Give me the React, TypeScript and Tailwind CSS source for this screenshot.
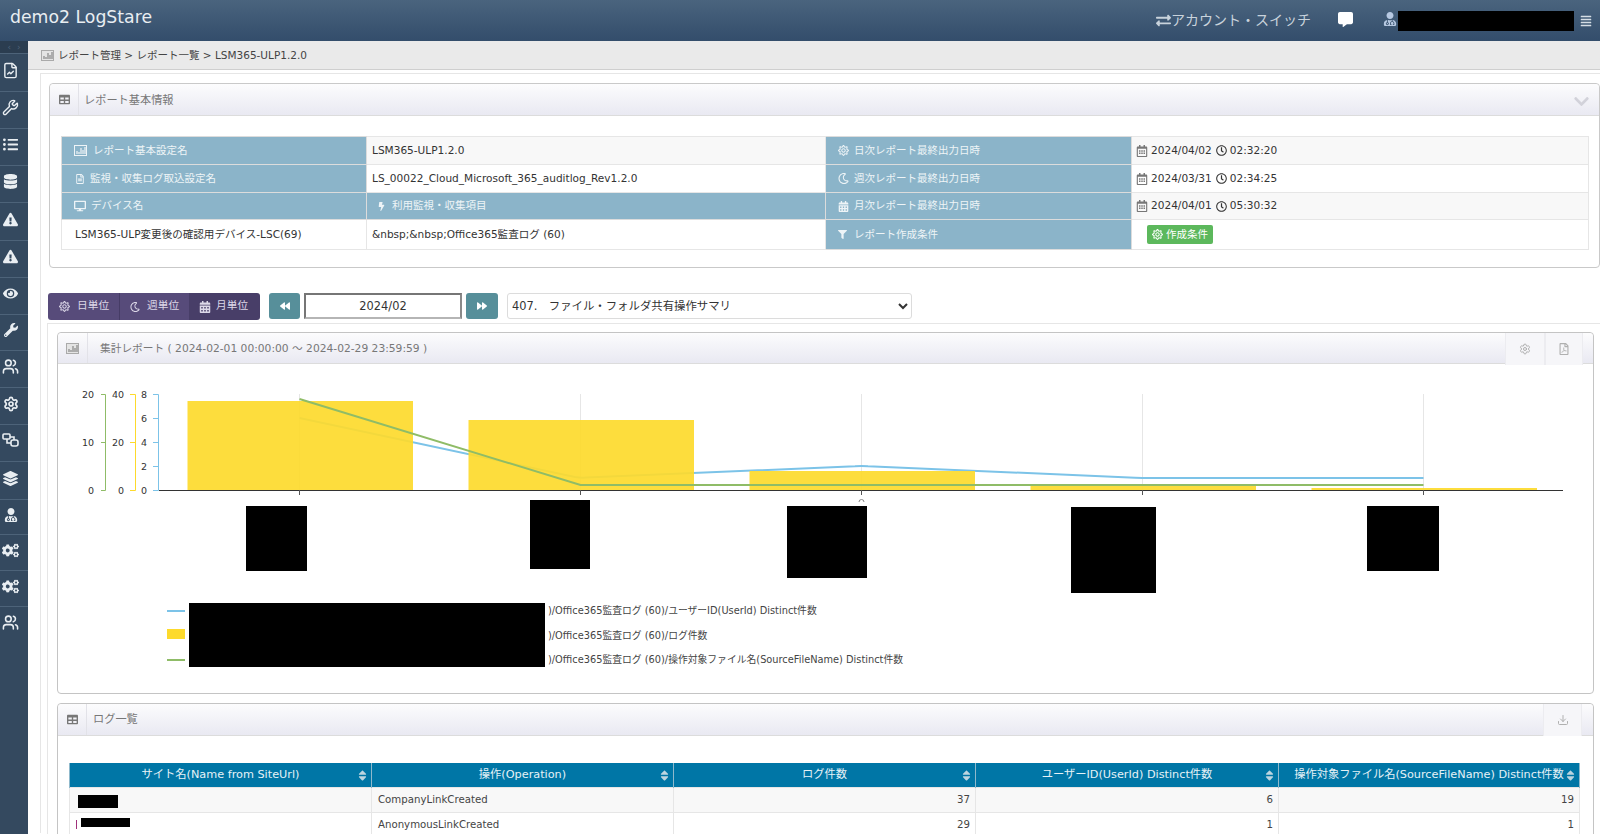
import type { ReactNode } from "react";
import { FileChartLine, Settings, Download, Users, Wrench } from "lucide-react";
import {
  FaAlignJustify,
  FaBolt,
  FaCalendarAlt,
  FaChevronDown,
  FaCogs,
  FaCommentAlt,
  FaDatabase,
  FaDesktop,
  FaExchangeAlt,
  FaExclamationTriangle,
  FaEye,
  FaFilter,
  FaLayerGroup,
  FaListUl,
  FaRegCalendarAlt,
  FaRegClock,
  FaRegFileAlt,
  FaRegFilePdf,
  FaRegMoon,
  FaRegSun,
  FaSort,
  FaTable,
  FaUserMd,
  FaWrench,
  FaBackward,
  FaForward,
} from "react-icons/fa";

// two linked boxes in the side menu, no package has this one
function LinkedBoxes() {
  return (
    <svg width="17" height="15" viewBox="0 0 17 15" fill="none" stroke="currentColor" strokeWidth="1.6">
      <rect x="1" y="1" width="7" height="5" rx="1" />
      <rect x="9" y="7" width="7" height="6" rx="2" />
      <path d="M8 4h4v3M5 6v4h4" />
    </svg>
  );
}

// small framed bar chart used in the breadcrumb and the report panel
function ChartBox({ fill = "#e4e4e4", stroke = "#aaa", bars = "#888" }: { fill?: string; stroke?: string; bars?: string }) {
  return (
    <svg width="13" height="11" viewBox="0 0 13 11">
      <rect x="0.5" y="0.5" width="12" height="10" fill={fill} stroke={stroke} />
      <path d="M3 9V6M5 9V7M7 9V3M9 9V5M11 9V2" stroke={bars} strokeWidth="1.2" />
    </svg>
  );
}

const sideIcons = [
  <FileChartLine key="a" size={17} strokeWidth={2} />,
  <Wrench key="b" size={17} strokeWidth={2} />,
  <FaListUl key="c" size={15} />,
  <FaDatabase key="d" size={15} />,
  <FaExclamationTriangle key="e" size={15} />,
  <FaExclamationTriangle key="f" size={15} />,
  <FaEye key="g" size={15} />,
  <FaWrench key="h" size={14} />,
  <Users key="i" size={17} strokeWidth={2.2} />,
  <Settings key="j" size={16} strokeWidth={2.6} />,
  <LinkedBoxes key="k" />,
  <FaLayerGroup key="l" size={15} />,
  <FaUserMd key="m" size={14} />,
  <FaCogs key="n" size={17} />,
  <FaCogs key="o" size={17} />,
  <Users key="p" size={17} strokeWidth={2.2} />,
];

const sideHeights = [38, 37, 37, 37, 38, 37, 37, 36, 37, 37, 37, 38, 35, 36, 36, 36];

function PanelHead({ icon, title, iconW, titleX, right, height = "h-[32px]" }: { icon: ReactNode; title: string; iconW: string; titleX: string; right?: ReactNode; height?: string }) {
  return (
    <div className={`relative flex items-center rounded-t-[4px] border-b border-[#dcdcdc] bg-gradient-to-b from-[#fcfcfd] to-[#e9e9f2] ${height}`}>
      <div className={`flex h-full items-center justify-center border-r border-[#e2e2e8] text-[#777] ${iconW}`}>{icon}</div>
      <span className={`text-[#777] ${titleX}`}>{title}</span>
      {right}
    </div>
  );
}

function HeadCell({ children, className }: { children: ReactNode; className: string }) {
  return (
    <div className={`absolute top-0 flex h-[32px] items-center justify-center border-x border-[#ececf0] bg-[#f6f6f9] text-[#b0b0b0] ${className}`}>
      {children}
    </div>
  );
}

function Label({ icon, text, pad }: { icon: ReactNode; text: string; pad: string }) {
  return (
    <td className="border border-[#dcdcdc] bg-[#8bb4c9] p-0 text-[10.5px] text-[#eef4f7]">
      <div className={`flex items-center ${pad}`}>
        {icon}
        <span>{text}</span>
      </div>
    </td>
  );
}

function Stamp({ date, time }: { date: string; time: string }) {
  return (
    <div className="flex items-center pl-[4px]">
      <FaRegCalendarAlt size={12} className="text-[#777]" />
      <span className="ml-[3px]">{date}</span>
      <FaRegClock size={11} className="ml-[4px] text-[#333]" />
      <span className="ml-[3px]">{time}</span>
    </div>
  );
}

const info = "border border-[#e6e6e6] p-0 text-[10.55px] text-[#333]";

const logColumns = [
  "サイト名(Name from SiteUrl)",
  "操作(Operation)",
  "ログ件数",
  "ユーザーID(UserId) Distinct件数",
  "操作対象ファイル名(SourceFileName) Distinct件数",
];

const logRows = [
  { op: "CompanyLinkCreated", count: 37, user: 6, file: 19 },
  { op: "AnonymousLinkCreated", count: 29, user: 1, file: 1 },
];

const ticks = [299.5, 580.5, 861.5, 1142.5, 1423.5];
const bars = [
  { x: 187.5, y: 401 },
  { x: 468.5, y: 420 },
  { x: 749.5, y: 471 },
  { x: 1030.5, y: 486 },
  { x: 1311.5, y: 488 },
];
const redactions = [
  "left-[188px] top-[142px] h-[65px] w-[61px]",
  "left-[472px] top-[136px] h-[69px] w-[60px]",
  "left-[729px] top-[142px] h-[72px] w-[80px]",
  "left-[1013px] top-[143px] h-[86px] w-[85px]",
  "left-[1309px] top-[142px] h-[65px] w-[72px]",
];

function Chart() {
  return (
    <svg className="absolute left-0 top-0" width="1536" height="329" viewBox="58 364 1536 329">
      {ticks.map((x) => (
        <line key={x} x1={x} x2={x} y1={394} y2={490} stroke="#e6e6e6" />
      ))}
      <path
        d="M299.5 418 L575 477 Q580.5 478 586 477.6 L855 466.3 Q861.5 465.7 868 466.3 L1135 477.7 Q1142 478 1150 478 L1423.5 478"
        fill="none"
        stroke="#7cc3e8"
        strokeWidth="2"
      />
      {bars.map((b) => (
        <rect key={b.x} x={b.x} y={b.y} width={225.5} height={490 - b.y} fill="#fdda2c" fillOpacity={0.92} />
      ))}
      <path d="M299.5 399 L580.5 485 L1423.5 485" fill="none" stroke="#8fbc67" strokeWidth="2" />
      <line x1={159} x2={1563} y1={490.5} y2={490.5} stroke="#333" />
      {ticks.map((x) => (
        <line key={x} x1={x} x2={x} y1={490} y2={495} stroke="#555" />
      ))}

      {/* three value axes */}
      <path d="M101 394.5h4.5v96h-4.5M101 442.5h4.5" fill="none" stroke="#8fbc67" />
      <path d="M130 394.5h5.5v96h-5.5M130 442.5h5.5" fill="none" stroke="#fdda2c" />
      <path d="M153 394.5h5.5v96h-5.5M153 418.5h5.5M153 442.5h5.5M153 466.5h5.5" fill="none" stroke="#7cc3e8" />
      <g fontSize="9.5" fill="#333" textAnchor="end">
        {[["20", 398], ["10", 446], ["0", 494]].map(([t, y]) => (
          <text key={t} x={94} y={y}>{t}</text>
        ))}
        {[["40", 398], ["20", 446], ["0", 494]].map(([t, y]) => (
          <text key={t} x={124} y={y}>{t}</text>
        ))}
        {[["8", 398], ["6", 422], ["4", 446], ["2", 470], ["0", 494]].map(([t, y]) => (
          <text key={t} x={147} y={y}>{t}</text>
        ))}
      </g>
      <path d="M859 502a2.5 2.5 0 0 1 5 0" fill="none" stroke="#888" />

      {/* legend keys */}
      <line x1={167} x2={185} y1={611} y2={611} stroke="#7cc3e8" strokeWidth="2" />
      <rect x={167} y={629} width={18} height={10} fill="#fdda2c" />
      <line x1={167} x2={185} y1={660} y2={660} stroke="#8fbc67" strokeWidth="2" />
    </svg>
  );
}

export default function App() {
  return (
    <div className="relative h-[834px] w-[1600px] overflow-hidden bg-white [font-family:DejaVu_Sans,Noto_Sans_CJK_JP,sans-serif] text-[#333]">
      {/* top bar */}
      <header className="relative h-[41px] bg-gradient-to-b from-[#4a647e] to-[#334d6b]">
        <span className="absolute left-[10px] top-[4px] text-[17.3px] leading-[27px] text-[#e9eef2]">demo2 LogStare</span>
        <div className="absolute left-[1156px] top-[9px] flex items-center text-[14px] leading-[22px] text-[#c9d3dc]">
          <FaExchangeAlt size={15} />
          <span>アカウント・スイッチ</span>
        </div>
        <FaCommentAlt size={15} className="absolute left-[1338px] top-[12px] text-white" />
        <FaUserMd size={14} className="absolute left-[1383px] top-[12px] text-[#b7c9e2]" />
        <div className="absolute left-[1398px] top-[11px] h-[20px] w-[176px] bg-black" />
        <FaAlignJustify size={12} className="absolute left-[1580px] top-[15px] text-[#d5dde4]" />
      </header>

      <div className="flex h-[793px]">
        {/* side menu */}
        <nav className="w-[28px] shrink-0 bg-[#34495f] text-[#e9eef2]">
          <div className="flex h-[12px] items-center justify-center gap-[6px] bg-[#2b3d50] text-[9px] leading-none text-[#4c6177]">
            <span>‹</span>
            <span>›</span>
          </div>
          {sideIcons.map((icon, i) => (
            <div
              key={i}
              className="flex items-center justify-center border-t border-[#4d6379] pb-[5px] pr-[7px]"
              style={{ height: sideHeights[i] }}
            >
              {icon}
            </div>
          ))}
        </nav>

        <main className="min-w-0 flex-1">
          {/* breadcrumb */}
          <div className="flex h-[29px] items-center border-b border-[#cfcfcf] bg-[#eaeaea] pl-[13px] pt-[1px] text-[10.5px] text-[#444]">
            <span className="mr-[4px]"><ChartBox /></span>
            <span>レポート管理 &gt; レポート一覧 &gt; LSM365-ULP1.2.0</span>
          </div>

          <div className="ml-[12px] mt-[3px] h-[760px] border-l border-t border-[#e6e6e6]">
            {/* basic report info */}
            <section className="ml-[8px] mt-[9px] h-[185px] rounded-[4px] border border-[#c9c9c9]">
              <PanelHead
                icon={<FaTable size={11} />}
                iconW="w-[29px]"
                title="レポート基本情報"
                titleX="ml-[5px] mt-[4px] text-[11.2px]"
                right={<FaChevronDown size={17} className="absolute right-[9px] top-[9px] text-[#d2d2da]" />}
              />
              <table className="ml-[11px] mt-[20px] w-[1527px] table-fixed border-collapse">
                <colgroup>
                  <col className="w-[305px]" />
                  <col className="w-[459px]" />
                  <col className="w-[306px]" />
                  <col className="w-[457px]" />
                </colgroup>
                <tbody>
                  <tr className="h-[28px] bg-[#f8f8f8]">
                    <Label icon={<span className="mr-[6px]"><ChartBox fill="none" stroke="#eef4f7" bars="#eef4f7" /></span>} text="レポート基本設定名" pad="pl-[12px]" />
                    <td className={`${info} pl-[5px]`}>LSM365-ULP1.2.0</td>
                    <Label icon={<FaRegSun size={11} className="mr-[5px]" />} text="日次レポート最終出力日時" pad="pl-[12px]" />
                    <td className={info}><Stamp date="2024/04/02" time="02:32:20" /></td>
                  </tr>
                  <tr className="h-[28px]">
                    <Label icon={<FaRegFileAlt size={10} className="mr-[5px]" />} text="監視・収集ログ取込設定名" pad="pl-[13px]" />
                    <td className={`${info} pl-[5px]`}>LS_00022_Cloud_Microsoft_365_auditlog_Rev1.2.0</td>
                    <Label icon={<FaRegMoon size={11} className="mr-[5px]" />} text="週次レポート最終出力日時" pad="pl-[12px]" />
                    <td className={info}><Stamp date="2024/03/31" time="02:34:25" /></td>
                  </tr>
                  <tr className="h-[27px] bg-[#f8f8f8]">
                    <Label icon={<FaDesktop size={12} className="mr-[5px]" />} text="デバイス名" pad="pl-[12px]" />
                    <Label icon={<FaBolt size={9} className="mr-[6px]" />} text="利用監視・収集項目" pad="pl-[10px]" />
                    <Label icon={<FaCalendarAlt size={11} className="mr-[5px]" />} text="月次レポート最終出力日時" pad="pl-[12px]" />
                    <td className={info}><Stamp date="2024/04/01" time="05:30:32" /></td>
                  </tr>
                  <tr className="h-[30px]">
                    <td className={`${info} pl-[13px]`}>LSM365-ULP変更後の確認用デバイス-LSC(69)</td>
                    <td className={`${info} pl-[5px]`}>&amp;nbsp;&amp;nbsp;Office365監査ログ (60)</td>
                    <Label icon={<FaFilter size={9} className="mr-[7px]" />} text="レポート作成条件" pad="pl-[12px]" />
                    <td className={info}>
                      <button className="ml-[15px] flex h-[19px] w-[66px] items-center justify-center gap-[3px] rounded-[2px] bg-[#5cb85c] text-[10.5px] text-white">
                        <FaRegSun size={11} />
                        作成条件
                      </button>
                    </td>
                  </tr>
                </tbody>
              </table>
            </section>

            {/* period controls */}
            <div className="ml-[7px] mt-[25px] flex h-[27px] items-start">
              <div className="flex h-[27px] w-[212px] overflow-hidden rounded-[3px] text-[10.7px] text-[#dcd8e8]">
                <div className="flex w-[72px] items-center border-r border-[#463c66] bg-[#574b7a] pl-[11px]">
                  <FaRegSun size={11} className="mr-[7px]" />日単位
                </div>
                <div className="flex w-[69px] items-center bg-[#574b7a] pl-[10px]">
                  <FaRegMoon size={10} className="mr-[7px]" />週単位
                </div>
                <div className="flex flex-1 items-center bg-[#483e68] pl-[10px]">
                  <FaCalendarAlt size={12} className="mr-[5px]" />月単位
                </div>
              </div>
              <button className="ml-[9px] flex h-[26px] w-[31px] items-center justify-center rounded-[3px] bg-[#578f9a] text-white">
                <FaBackward size={10} />
              </button>
              <input
                readOnly
                value="2024/02"
                className="ml-[4px] h-[26px] w-[158px] border-2 border-[#767676] border-b-[#b5b5b5] border-r-[#8a8a8a] text-center text-[11.4px] text-[#333]"
              />
              <button className="ml-[4px] flex h-[26px] w-[32px] items-center justify-center rounded-[3px] bg-[#578f9a] text-white">
                <FaForward size={10} />
              </button>
              <select className="ml-[9px] h-[26px] w-[405px] rounded-[3px] border border-[#dcdcdc] bg-white text-[11.4px] text-[#333]">
                <option>407.　ファイル・フォルダ共有操作サマリ</option>
              </select>
            </div>

            <div className="ml-[6px] mt-[3px] h-[520px] border-l border-t border-[#e6e6e6]">
              {/* aggregate report */}
              <section className="relative ml-[9px] mt-[8px] h-[362px] w-[1537px] rounded-[4px] border border-[#c4c4c4]">
                <PanelHead
                  icon={<ChartBox />}
                  iconW="w-[30px]"
                  title="集計レポート ( 2024-02-01 00:00:00 ～ 2024-02-29 23:59:59 )"
                  titleX="ml-[12px] mt-[2px] text-[10.7px]"
                  height="h-[31px]"
                  right={
                    <>
                      <HeadCell className="left-[1447px] w-[40px]"><Settings size={12} /></HeadCell>
                      <HeadCell className="left-[1487px] w-[38px]"><FaRegFilePdf size={12} /></HeadCell>
                    </>
                  }
                />
                <div className="relative h-[329px]">
                  <Chart />
                  {redactions.map((r) => (
                    <div key={r} className={`absolute bg-black ${r}`} />
                  ))}
                  <div className="absolute left-[131px] top-[239px] h-[64px] w-[356px] bg-black" />
                  <div className="absolute left-[490px] top-[235px] text-[9.8px] leading-[24.5px] text-[#444]">
                    <div>)/Office365監査ログ (60)/ユーザーID(UserId) Distinct件数</div>
                    <div>)/Office365監査ログ (60)/ログ件数</div>
                    <div>)/Office365監査ログ (60)/操作対象ファイル名(SourceFileName) Distinct件数</div>
                  </div>
                </div>
              </section>

              {/* log list */}
              <section className="relative ml-[9px] mt-[9px] h-[140px] w-[1537px] rounded-t-[4px] border border-[#c4c4c4]">
                <PanelHead
                  icon={<FaTable size={11} />}
                  iconW="w-[29px]"
                  title="ログ一覧"
                  titleX="ml-[6px] mt-[2px] text-[11.2px]"
                  right={<HeadCell className="left-[1485px] w-[39px]"><Download size={12} /></HeadCell>}
                />
                <table className="ml-[11px] mt-[27px] w-[1510px] table-fixed border-collapse">
                  <colgroup>
                    <col className="w-[302px]" />
                    <col className="w-[302px]" />
                    <col className="w-[302px]" />
                    <col className="w-[303px]" />
                    <col className="w-[301px]" />
                  </colgroup>
                  <thead>
                    <tr className="h-[24px] bg-[#0076a6] text-[11.25px] font-normal text-[#e6f2f7]">
                      {logColumns.map((c) => (
                        <th key={c} className="relative border-x border-[#8fb9cc] p-0 pt-[1px] font-normal">
                          {c}
                          <FaSort size={13} className="absolute right-[2px] top-[6px] text-[#bcd5e0]" />
                        </th>
                      ))}
                    </tr>
                  </thead>
                  <tbody className="text-[10.2px] text-[#444]">
                    {logRows.map((r, i) => (
                      <tr key={r.op} className={`h-[25px] ${i === 0 ? "bg-[#f8f8f8]" : ""}`}>
                        <td className="relative border border-[#e6e6e6] p-0">
                          {i === 0 ? (
                            <div className="absolute left-[8px] top-[7px] h-[13px] w-[40px] bg-black" />
                          ) : (
                            <>
                              <div className="absolute left-[6px] top-[7px] h-[9px] w-px bg-[#a0307a]" />
                              <div className="absolute left-[11px] top-[5px] h-[9px] w-[49px] bg-black" />
                            </>
                          )}
                        </td>
                        <td className="border border-[#e6e6e6] pl-[6px]">{r.op}</td>
                        <td className="border border-[#e6e6e6] pr-[5px] text-right">{r.count}</td>
                        <td className="border border-[#e6e6e6] pr-[5px] text-right">{r.user}</td>
                        <td className="border border-[#e6e6e6] pr-[5px] text-right">{r.file}</td>
                      </tr>
                    ))}
                  </tbody>
                </table>
              </section>
            </div>
          </div>
        </main>
      </div>
    </div>
  );
}
